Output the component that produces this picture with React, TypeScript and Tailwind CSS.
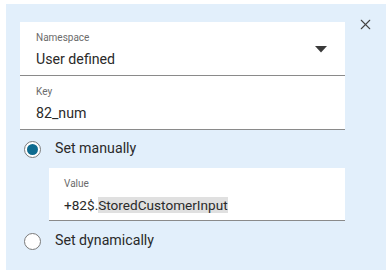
import { X } from 'lucide-react';

function Field({ label, value, dropdown }: { label: string; value: React.ReactNode; dropdown?: boolean }) {
  return (
    <div className="relative h-[54px] bg-white border-b border-[#8a8a8a] px-4 pt-[9px]">
      <p className="text-[10px] leading-[14px] text-[#6b6b6b]">{label}</p>
      <p className="text-[14.2px] leading-[20px] text-[#2a2a2a] mt-[4px]">{value}</p>
      {dropdown && (
        <svg className="absolute right-[18px] top-[24px]" width="12" height="7" viewBox="0 0 12 7">
          <path d="M0 0h12L6 6.5z" fill="#3a3a3a" />
        </svg>
      )}
    </div>
  );
}

function Radio({ checked, label }: { checked?: boolean; label: string }) {
  return (
    <div className="flex items-center h-[24px] pl-[4px]">
      <span className="w-[17px] h-[17px] rounded-full border border-[#7a7a7a] bg-white flex items-center justify-center">
        {checked && <span className="w-[11px] h-[11px] rounded-full bg-[#0e6b8f]" />}
      </span>
      <span className="ml-[14px] text-[14.2px] text-[#2a2a2a]">{label}</span>
    </div>
  );
}

export default function App() {
  return (
    <div className="w-[390px] h-[275px] bg-white pt-[4px] pl-[6px]" style={{ fontFamily: 'Roboto, "Noto Sans", sans-serif' }}>
      <div className="relative w-[380px] h-[266px] bg-[#e2effb] pl-[14px] pt-[18px]">
        <button className="absolute right-[12px] top-[12px] text-[#444]">
          <X className="w-[17px] h-[17px]" strokeWidth={1.5} />
        </button>
        <div className="w-[325px]">
          <Field label="Namespace" value="User defined" dropdown />
          <Field label="Key" value="82_num" />
        </div>
        <div className="mt-[7px]">
          <Radio checked label="Set manually" />
        </div>
        <div className="ml-[29px] mt-[7px] w-[296px] h-[53px] bg-white border-b border-[#8a8a8a] px-[15px] pt-[9px]">
          <p className="text-[10px] leading-[14px] text-[#6b6b6b]">Value</p>
          <p className="text-[13.6px] leading-[20px] text-[#2a2a2a] mt-[4px]">
            +82$.<span className="bg-[#e0e0e0]">StoredCustomerInput</span>
          </p>
        </div>
        <div className="mt-[8px]">
          <Radio label="Set dynamically" />
        </div>
      </div>
    </div>
  );
}
